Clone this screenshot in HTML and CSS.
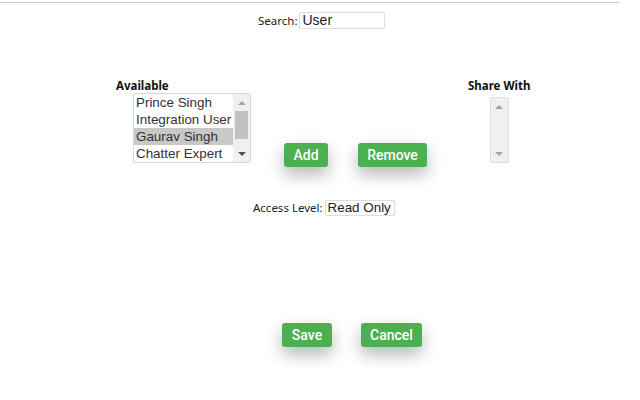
FILE: index.html
```html
<!DOCTYPE html>
<html>
<head>
<meta charset="utf-8">
<link rel="stylesheet" href="styles.css">
</head>
<body>
<div class="page">
  <div class="search-row">
    <span class="lbl">Search:</span>
    <div class="field search-field">User</div>
  </div>

  <div class="transfer">
    <div class="col col-available">
      <div class="head">Available</div>
      <div class="listbox">
        <div class="items">
          <div class="item">Prince Singh</div>
          <div class="item">Integration User</div>
          <div class="item selected">Gaurav Singh</div>
          <div class="item">Chatter Expert</div>
        </div>
        <div class="sbar">
          <div class="arrow up"></div>
          <div class="track"><div class="thumb"></div></div>
          <div class="arrow down"></div>
        </div>
      </div>
    </div>
    <button class="btn btn-add">Add</button>
    <button class="btn btn-remove">Remove</button>
    <div class="col col-share">
      <div class="head">Share With</div>
      <div class="listbox empty">
        <div class="sbar full">
          <div class="arrow up"></div>
          <div class="track"></div>
          <div class="arrow down"></div>
        </div>
      </div>
    </div>
  </div>

  <div class="access-row">
    <span class="lbl">Access Level:</span>
    <div class="field access-field">Read Only</div>
  </div>

  <div class="actions">
    <button class="btn btn-save">Save</button>
    <button class="btn btn-cancel">Cancel</button>
  </div>
</div>
</body>
</html>
```

FILE: styles.css
```css
html, body {
  margin: 0;
  padding: 0;
  background: #ffffff;
}
body {
  font-family: "Noto Sans", "Liberation Sans", sans-serif;
  color: #222;
}
.page {
  width: 619px;
  margin-top: 2px;
  border-top: 1px solid #c6c6c6;
  height: 397px;
}
.lbl {
  font-size: 11.5px;
  color: #222;
  line-height: 16px;
}
.field {
  box-sizing: border-box;
  border: 1px solid #dcdcdc;
  border-radius: 2px;
  font-family: "Liberation Sans", Arial, sans-serif;
  font-size: 14px;
  line-height: 15px;
  height: 17px;
  padding-left: 2px;
  color: #222;
  margin-left: 2px;
  white-space: nowrap;
  overflow: hidden;
}
.search-row {
  display: flex;
  align-items: center;
  padding-left: 258px;
  margin-top: 9px;
}
.search-field { width: 86px; }

.transfer {
  display: flex;
  align-items: flex-start;
  margin-top: 50px;
  padding-left: 116px;
}
.col { display: flex; flex-direction: column; }
.head {
  font-weight: 700;
  font-size: 11.5px;
  line-height: 14px;
  color: #111;
}
.listbox {
  display: flex;
  box-sizing: border-box;
  border: 1px solid #d8d8d8;
  border-radius: 2px;
  background: #fff;
}
.col-available .listbox {
  margin-left: 17px;
  width: 118px;
  height: 70px;
}
.items { flex: 1; display: flex; flex-direction: column; min-width: 0; }
.item {
  font-family: "Liberation Sans", Arial, sans-serif;
  font-size: 13.4px;
  line-height: 17px;
  height: 17px;
  padding-left: 2px;
  color: #333;
  white-space: nowrap;
  overflow: hidden;
}
.item.selected { background: #c8c8c8; }
.sbar {
  width: 17px;
  flex: none;
  background: #f0f0f0;
  display: flex;
  flex-direction: column;
}
.arrow {
  height: 17px;
  display: flex;
  align-items: center;
  justify-content: center;
}
.arrow::after {
  content: "";
  width: 0;
  height: 0;
  border-left: 4px solid transparent;
  border-right: 4px solid transparent;
}
.arrow.up::after { border-bottom: 4px solid #a3a3a3; }
.arrow.down::after { border-top: 4px solid #505050; }
.sbar.full .arrow.down::after { border-top-color: #a3a3a3; }
.track { flex: 1; display: flex; justify-content: center; }
.thumb {
  width: 13px;
  height: 28px;
  background: #c1c1c1;
}
.col-share { align-items: center; margin-left: 41px; }
.col-share .listbox {
  margin-top: 4px;
  width: 19px;
  height: 66px;
  background: #f0f0f0;
  border-color: #dedede;
}
.col-share .sbar { width: 17px; flex: 1; }

.btn {
  box-sizing: border-box;
  height: 24px;
  border: none;
  border-radius: 3px;
  background: #4caf50;
  color: #fff;
  font-family: Roboto, "Liberation Sans", Arial, sans-serif;
  font-weight: 500;
  font-size: 14px;
  padding: 0;
  text-align: center;
  box-shadow: 0 8px 16px 0 rgba(0, 0, 0, 0.2), 0 6px 20px 0 rgba(0, 0, 0, 0.1);
}
.btn-add { width: 44px; margin-left: 33px; margin-top: 64px; }
.btn-remove { width: 69px; margin-left: 30px; margin-top: 64px; }

.access-row {
  display: flex;
  align-items: center;
  padding-left: 253px;
  margin-top: 33px;
}
.access-field { width: 70px; height: 16px; line-height: 14px; font-size: 13.4px; }

.actions {
  display: flex;
  padding-left: 282px;
  margin-top: 107px;
}
.btn-save { width: 50px; }
.btn-cancel { width: 61px; margin-left: 29px; }
```
